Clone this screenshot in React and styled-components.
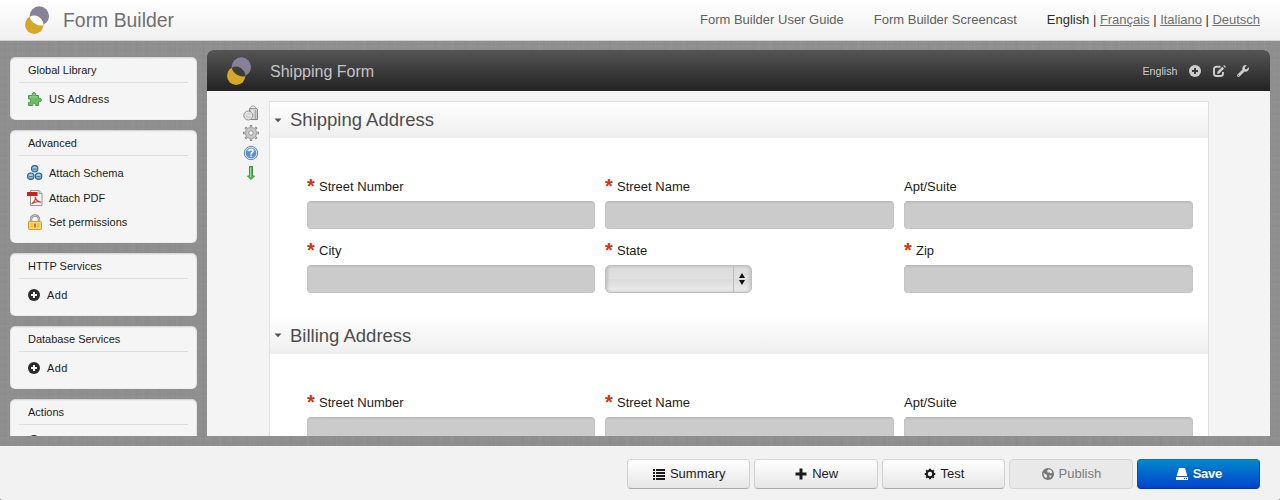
import React from "react";
import styled, { createGlobalStyle, css } from "styled-components";
import { FaWrench } from "react-icons/fa";

const GlobalStyle = createGlobalStyle`
  * { box-sizing: border-box; }
  body { margin: 0; background: #777; }
`;

const linen = css`
  background-color: #8f8f8f;
  background-image:
    repeating-linear-gradient(90deg, rgba(255,255,255,.02) 0 1px, transparent 1px 4px, rgba(0,0,0,.01) 4px 6px, transparent 6px 11px),
    repeating-linear-gradient(90deg, rgba(0,0,0,.015) 0 2px, transparent 2px 17px, rgba(255,255,255,.03) 17px 18px, transparent 18px 29px),
    repeating-linear-gradient(0deg, rgba(255,255,255,.02) 0 1px, transparent 1px 3px, rgba(0,0,0,.01) 3px 4px, transparent 4px 7px);
`;

const Page = styled.div`
  display: flex;
  flex-direction: column;
  height: 500px;
  overflow: hidden;
  font-family: "Liberation Sans", Helvetica, Arial, sans-serif;
  font-size: 13px;
  color: #1c1c1c;
`;

const TopBar = styled.header`
  display: flex;
  align-items: center;
  flex: none;
  height: 41px;
  padding: 0 20px 0 24px;
  background: linear-gradient(#fff, #f0f0f0);
  border-bottom: 1px solid #d2d2d2;
`;

const AppTitle = styled.h1`
  margin: 0 auto 0 13px;
  font-size: 19.4px;
  font-weight: 400;
  line-height: 24px;
  color: #707070;
`;

const Links = styled.nav`
  display: flex;
  gap: 30px;
  line-height: 16px;
  color: #606060;
`;

const Languages = styled.span`
  color: #2c2c2c;
  white-space: nowrap;
  letter-spacing: -0.02px;
  u { color: #707070; }
`;

const Workspace = styled.div`
  ${linen}
  display: flex;
  gap: 10px;
  height: 405px;
  flex: none;
  padding: 0 10px 10px;
  overflow: hidden;
`;

const Sidebar = styled.aside`
  display: flex;
  flex-direction: column;
  gap: 10px;
  width: 187px;
  height: 395px;
  padding-top: 16px;
  overflow: hidden;
`;

const Card = styled.section`
  flex: none;
  padding: 0 9px;
  height: ${(p) => p.$height}px;
  border-radius: 5px;
  background: #f5f5f5;
  box-shadow: inset 0 1px 2px rgba(0,0,0,.14), inset 0 0 1px rgba(0,0,0,.25);
`;

const CardTitle = styled.h2`
  margin: 0 0 ${(p) => (p.$tight ? 4 : 5)}px;
  padding: 0 9px;
  height: 26px;
  font-size: 11px;
  font-weight: 400;
  line-height: 27px;
  border-bottom: 1px solid #ddd;
`;

const CardItem = styled.div`
  display: flex;
  align-items: center;
  gap: ${(p) => p.$gap ?? 6}px;
  height: 24.5px;
  padding-left: ${(p) => p.$indent ?? 8}px;
  font-size: 11px;
  letter-spacing: ${(p) => p.$track || 0}px;
  svg { flex: none; }
`;

const Editor = styled.main`
  display: flex;
  flex-direction: column;
  flex: 1;
  height: 386px;
  margin-top: 9px;
  border-radius: 6px 6px 0 0;
  background: #f4f4f4;
  overflow: hidden;
`;

const EditorBar = styled.div`
  display: flex;
  align-items: center;
  flex: none;
  height: 41px;
  padding: 0 21px 0 19px;
  background: linear-gradient(#555, #222);
  color: #ccc;
  > svg { margin-top: 1px; }
`;

const FormTitle = styled.h2`
  margin: 0 auto 0 18px;
  font-size: 16px;
  font-weight: 400;
  line-height: 20px;
  padding-top: 2px;
  color: #c4c4c4;
`;

const EditorTools = styled.div`
  display: flex;
  align-items: center;
  gap: 11.5px;
  font-size: 10.7px;
`;

const EditorBody = styled.div`
  display: flex;
  padding-top: 10px;
`;

const ToolColumn = styled.div`
  display: flex;
  flex-direction: column;
  align-items: center;
  gap: 4px;
  width: 62px;
  padding: 4px 0 0 26px;
`;

const FormSheet = styled.div`
  width: 940px;
  height: 500px;
  border: 1px solid #e0e0e0;
  background: #fff;
`;

const SectionHead = styled.h3`
  display: flex;
  align-items: center;
  gap: 8px;
  height: ${(p) => (p.$first ? 36 : 37)}px;
  margin: 0;
  padding-left: 4px;
  font-size: 18.5px;
  font-weight: 400;
  color: #4d4d4d;
  background: linear-gradient(#fff, #eee);
`;

const Fields = styled.div`
  display: grid;
  grid-template-columns: 288px 289px 289px;
  gap: 12px 10px;
  padding: 39px 15px 24px 37px;
`;

const Field = styled.label`
  display: flex;
  flex-direction: column;
  height: 52px;
`;

const FieldLabel = styled.span`
  display: flex;
  gap: 4px;
  height: 24px;
  line-height: 19px;
  white-space: nowrap;
`;

const Required = styled.span`
  width: 8px;
  font-size: 20px;
  font-weight: 700;
  line-height: 18px;
  color: #d8320b;
`;

const TextInput = styled.input`
  width: 100%;
  height: 28px;
  border: 1px solid #bbb;
  border-color: #b9b9b9 #c4c4c4 #c6c6c6;
  border-radius: 4px;
  background: #cbcbcb;
  box-shadow: inset 0 1px 1px rgba(0,0,0,.06);
`;

const SelectBox = styled.div`
  display: flex;
  justify-content: flex-end;
  width: 147px;
  height: 28px;
  border: 1px solid #c0c0c0;
  border-radius: 5px;
  background: linear-gradient(#dcdcdc, #e0e0e0 50%, #dadada 50%, #ededed);
  box-shadow: inset 2px 0 3px rgba(0,0,0,.12), inset -2px 0 3px rgba(0,0,0,.1);
`;

const SelectArrows = styled.span`
  display: flex;
  align-items: center;
  justify-content: center;
  width: 18px;
  padding-right: 1px;
  border-left: 1px solid #bbb;
`;

const Footer = styled.footer`
  display: flex;
  gap: 4px;
  justify-content: flex-end;
  flex: none;
  height: 54px;
  padding: 13px 20px 0;
  border-radius: 0 0 2px 2px;
  background: #f2f2f2;
`;

const looks = {
  normal: css`
    color: #1c1c1c;
    background: linear-gradient(#fff, #e6e6e6);
    border-color: #d8d8d8 #d0d0d0 #aaa;
  `,
  disabled: css`
    color: #7c7c7c;
    background: #e9e9e9;
    border-color: #d4d4d4;
  `,
  primary: css`
    color: #fff;
    font-weight: 700;
    letter-spacing: -0.3px;
    text-shadow: 0 -1px 0 rgba(0,0,0,.25);
    background: linear-gradient(#08c, #04c);
    border-color: #0675bb #0452b8 #0038a8;
  `,
};

const Button = styled.button`
  display: flex;
  align-items: center;
  justify-content: center;
  gap: 5px;
  width: 123.4px;
  height: 30px;
  padding: 0 0 2px 1px;
  font: 13px "Liberation Sans", Helvetica, Arial, sans-serif;
  border: 1px solid;
  border-radius: 4px;
  ${(p) => looks[p.$look || "normal"]}
  svg { margin-top: 2px; }
`;

const Logo = ({ hole }) => (
  <svg width="26" height="29" viewBox="0 0 26 29">
    <circle cx="15.3" cy="10" r="9.7" fill="#868099" />
    <circle cx="10.2" cy="18.7" r="9.2" fill="#d8a629" />
    <path d="M6.2 10.5C10 8.3 15 10 17.7 13.700C19.400 16 19.700 18 19.200 19.300C15.500 20.200 10.500 18.500 8 15.300C6.500 13.500 5.800 11.800 6.200 10.500Z" fill={hole} />
  </svg>
);

const PlusCircle = ({ color = "#2b2b2b", hole = "#fff", size = 12 }) => (
  <svg width={size} height={size} viewBox="0 0 12 12">
    <circle cx="6" cy="6" r="6" fill={color} />
    <path d="M5 3h2v2h2v2H7v2H5V7H3V5h2z" fill={hole} />
  </svg>
);

const Puzzle = () => (
  <svg width="16" height="16" viewBox="0 0 16 16">
    <path d="M1.500 4.500H5.300V3.500C4.600 1 9.200 1 8.500 3.500V4.500H11.500V7.500H12.500C15.300 7 15.300 11 12.500 10.500H11.500V14.500H8.800V13.500C8.800 12 5.800 12 5.800 13.500V14.500H1.500V11.500H2.500C4.200 11.500 4.200 8 2.500 8H1.500Z" fill="#6cbd66" stroke="#479a47" />
    <path d="M3 6h7.500M6.500 3.500h1" stroke="#95d88e" />
  </svg>
);

const Ball = ({ cx, cy }) => (
  <g>
    <circle cx={cx} cy={cy} r="3.200" fill="#7db5db" stroke="#315f88" strokeWidth="1.100" />
    <ellipse cx={cx} cy={cy - 1.1} rx="1.900" ry=".9" fill="#b5d8ee" />
    <path d={`M${cx - 1.8} ${cy + 0.3}h3.600`} stroke="#3d76a3" strokeWidth=".9" />
  </g>
);

const Schema = () => (
  <svg width="16" height="16" viewBox="0 0 16 16">
    <Ball cx={7.7} cy={3.8} />
    <Ball cx={3.8} cy={11.2} />
    <Ball cx={11.6} cy={11.2} />
  </svg>
);

const Pdf = () => (
  <svg width="16" height="16" viewBox="0 0 16 16">
    <path d="M3.500.5H12L15 3.500V15.500H3.500Z" fill="#f6f6f6" stroke="#999" />
    <path d="M12 .5V3.500H15" fill="#ddd" stroke="#999" />
    <path d="M0 2h10.500v4H0z" fill="#cf1f1c" />
    <path d="M4.500 13.800C8 11.500 8.700 9 8.200 6.800C8.700 9.800 10.500 11.600 14 12.200C10.500 11.200 7.500 12 4.500 13.800Z" fill="none" stroke="#d0302c" strokeWidth="1.100" />
  </svg>
);

const Lock = () => (
  <svg width="16" height="16" viewBox="0 0 16 16">
    <path d="M4 8V5.500C4 .2 12 .2 12 5.500V8" fill="none" stroke="#888" strokeWidth="2.400" />
    <path d="M4 8V5.500C4 .2 12 .2 12 5.500V8" fill="none" stroke="#ccc" strokeWidth="1" />
    <rect x="1.500" y="7.500" width="13" height="8" rx=".8" fill="#f8d768" stroke="#d39a32" />
    <path d="M3.500 10h2.500M3.500 12.500h2.500M10 10h2.500M10 12.500h2.500" stroke="#e0a63a" />
    <path d="M7 9.500h2v4H7z" fill="#b78022" />
  </svg>
);

const Trash = () => (
  <svg width="16" height="16" viewBox="0 0 16 16">
    <path d="M6.500 3.500L7.500 14.500H14.500V4.500L13 3Z" fill="#d2d2d2" stroke="#858585" />
    <path d="M7 3.500C8 0 12 0 13 3.500Z" fill="#eee" stroke="#999" />
    <path d="M9.500 5v9" stroke="#f0f0f0" strokeWidth="1.500" />
    <path d="M12.500 5v9" stroke="#aaa" strokeWidth="1.500" />
    <circle cx="5.300" cy="10.500" r="4.500" fill="#e4e4e4" stroke="#8d8d8d" />
    <circle cx="5.300" cy="10.500" r="2.600" fill="#d0d0d0" />
    <path d="M3.500 9l2 2 2-1" fill="none" stroke="#f4f4f4" />
  </svg>
);

const Cog = () => (
  <svg width="16" height="16" viewBox="0 0 16 16">
    <g stroke="#8a8a8a" strokeWidth="2.400">
      <path d="M8 0V16M0 8H16M2.300 2.300L13.700 13.700M2.300 13.700L13.700 2.300" />
    </g>
    <circle cx="8" cy="8" r="5.600" fill="#c4c4c4" stroke="#929292" strokeWidth=".8" />
    <path d="M8 1V15M1 8H15M3 3L13 13M3 13L13 3" stroke="#c4c4c4" strokeWidth="1.100" />
    <circle cx="8" cy="8" r="4" fill="#ccc" />
    <circle cx="8" cy="8" r="2.300" fill="#f4f4f4" stroke="#8c8c8c" strokeWidth=".9" />
  </svg>
);

const Help = () => (
  <svg width="16" height="16" viewBox="0 0 16 16">
    <circle cx="8" cy="8" r="6.700" fill="#d5e4f5" stroke="#6388b9" />
    <circle cx="8" cy="8" r="5.300" fill="#5b90d0" />
    <path d="M3.500 6C5 2.300 11 2.300 12.500 6Z" fill="#84afe0" />
    <path d="M6 6.300C6 3.800 10.200 3.900 10 6.300C9.900 7.700 8 7.600 8 9.400" fill="none" stroke="#fff" strokeWidth="1.500" />
    <path d="M7.200 10.500h1.600v1.500H7.200z" fill="#fff" />
  </svg>
);

const ArrowDown = () => (
  <svg width="16" height="16" viewBox="0 0 16 16">
    <path d="M6.500 1.500H9.500V11H11.500L8 14.500L4.500 11H6.500Z" fill="#62b45c" stroke="#3c8d3b" />
    <path d="M7.500 2.500V12" stroke="#a6dda0" />
  </svg>
);

const Edit = () => (
  <svg width="13" height="12" viewBox="0 0 13 12">
    <path d="M7.500 1.800H3.500Q1 1.800 1 4V8.800Q1 11 3.500 11H7.500Q10 11 10 8.800V7" fill="none" stroke="#ccc" strokeWidth="1.900" />
    <path d="M4 9L4.600 6.500L9.300 1.800L11.100 3.600L6.400 8.400Z" fill="#ccc" />
    <path d="M10.200 .9L11.100 0L13 1.900L12.100 2.800Z" fill="#ccc" />
  </svg>
);

const ListIcon = () => (
  <svg width="12" height="12" viewBox="0 0 12 12" fill="currentColor">
    {[0, 3, 6, 9].map((y) => (
      <path key={y} d={`M0 ${y + 1}h2v2H0zM3 ${y + 1}h9v2H3z`} />
    ))}
  </svg>
);

const PlusIcon = () => (
  <svg width="12" height="12" viewBox="0 0 12 12">
    <path d="M4.500 .5h3v4h4v3h-4v4h-3v-4h-4v-3h4z" fill="currentColor" />
  </svg>
);

const GearIcon = () => (
  <svg width="12" height="12" viewBox="0 0 12 12" stroke="currentColor" fill="none">
    <circle cx="6" cy="6" r="3.300" strokeWidth="2.200" />
    <path d="M6 .7v1.500M6 9.800v1.500M.7 6h1.500M9.800 6h1.500M2.200 2.200l1 1M8.800 8.800l1 1M2.200 9.800l1-1M8.800 3.200l1-1" strokeWidth="2" />
  </svg>
);

const GlobeIcon = () => (
  <svg width="12" height="12" viewBox="0 0 12 12">
    <circle cx="6" cy="6" r="6" fill="#777" />
    <path d="M6.500 1.300L9 2L10.500 4.500L8.500 5.500L7.500 4.300L5.800 4.800L5 3ZM1.400 5L4 6.200L5.300 7.800L4.200 10.300L2.300 8.700ZM7 7.200L9.600 7.700L8 10Z" fill="#e9e9e9" />
  </svg>
);

const DriveIcon = () => (
  <svg width="12" height="12" viewBox="0 0 12 12">
    <path d="M3 0H9L11.300 8H.7ZM0 9H12V12H0Z" fill="#fff" />
    <path d="M8 10h1v1H8zM10 10h1v1h-1z" fill="#0450c8" />
  </svg>
);

const Caret = () => (
  <svg width="8" height="5" viewBox="0 0 8 5">
    <path d="M.5 .5h7L4 4.300z" fill="#555" />
  </svg>
);

const Input = ({ label, required, select }) => (
  <Field>
    <FieldLabel>
      {required && <Required>*</Required>}
      {label}
    </FieldLabel>
    {select ? (
      <SelectBox>
        <SelectArrows>
          <svg width="6" height="12" viewBox="0 0 6 12">
            <path d="M0 5L3 0L6 5ZM0 7H6L3 12Z" fill="#111" />
          </svg>
        </SelectArrows>
      </SelectBox>
    ) : (
      <TextInput />
    )}
  </Field>
);

const AddressSection = ({ title, first }) => (
  <section>
    <SectionHead $first={first}>
      <Caret />
      {title}
    </SectionHead>
    <Fields>
      <Input label="Street Number" required />
      <Input label="Street Name" required />
      <Input label="Apt/Suite" />
      <Input label="City" required />
      <Input label="State" required select />
      <Input label="Zip" required />
    </Fields>
  </section>
);

const AddCard = ({ title }) => (
  <Card $height={63}>
    <CardTitle $tight>{title}</CardTitle>
    <CardItem $gap={7} $indent={9} $track={0.4}>
      <PlusCircle />
      Add
    </CardItem>
  </Card>
);

export default function App() {
  return (
    <Page>
      <GlobalStyle />
      <TopBar>
        <Logo hole="#fff" />
        <AppTitle>Form Builder</AppTitle>
        <Links>
          <span>Form Builder User Guide</span>
          <span>Form Builder Screencast</span>
          <Languages>
            English | <u>Français</u> | <u>Italiano</u> | <u>Deutsch</u>
          </Languages>
        </Links>
      </TopBar>
      <Workspace>
        <Sidebar>
          <Card $height={63}>
            <CardTitle $tight>Global Library</CardTitle>
            <CardItem $track={0.25}><Puzzle />US Address</CardItem>
          </Card>
          <Card $height={113}>
            <CardTitle>Advanced</CardTitle>
            <CardItem><Schema />Attach Schema</CardItem>
            <CardItem><Pdf />Attach PDF</CardItem>
            <CardItem><Lock />Set permissions</CardItem>
          </Card>
          <AddCard title="HTTP Services" />
          <AddCard title="Database Services" />
          <AddCard title="Actions" />
        </Sidebar>
        <Editor>
          <EditorBar>
            <Logo hole="#3c3c3c" />
            <FormTitle>Shipping Form</FormTitle>
            <EditorTools>
              English
              <PlusCircle color="#ccc" hole="#3a3a3a" />
              <Edit />
              <FaWrench size={12} />
            </EditorTools>
          </EditorBar>
          <EditorBody>
            <ToolColumn>
              <Trash />
              <Cog />
              <Help />
              <ArrowDown />
            </ToolColumn>
            <FormSheet>
              <AddressSection title="Shipping Address" first />
              <AddressSection title="Billing Address" />
            </FormSheet>
          </EditorBody>
        </Editor>
      </Workspace>
      <Footer>
        <Button><ListIcon />Summary</Button>
        <Button><PlusIcon />New</Button>
        <Button><GearIcon />Test</Button>
        <Button $look="disabled"><GlobeIcon />Publish</Button>
        <Button $look="primary"><DriveIcon />Save</Button>
      </Footer>
    </Page>
  );
}
